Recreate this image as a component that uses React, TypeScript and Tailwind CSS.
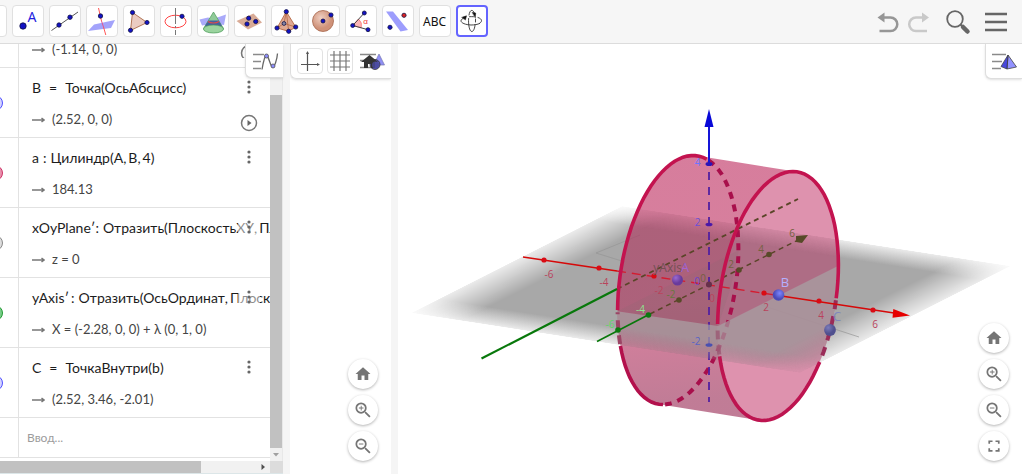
import type { ReactNode } from "react";

const BLUE = "#0b0bd0";

function Dot({ x, y, r = 3, fill = "#1212c4" }: { x: number; y: number; r?: number; fill?: string }) {
  return <circle cx={x} cy={y} r={r} fill={fill} stroke="#111144" strokeWidth="0.8" />;
}

const tools: { name: string; icon: ReactNode }[] = [
  { name: "Перемещать", icon: null },
  {
    name: "Точка",
    icon: (
      <>
        <Dot x={11} y={21} r={3.2} />
        <text x="20" y="16.5" fontSize="14" textAnchor="middle" fill="#1f1fe0" className="font-['Noto_Sans',sans-serif]">A</text>
      </>
    ),
  },
  {
    name: "Прямая",
    icon: (
      <>
        <path d="M2.5 25.5 29 7" stroke="#555" strokeWidth="1" />
        <Dot x={10} y={20} r={2.2} />
        <Dot x={21} y={12.2} r={2.2} />
      </>
    ),
  },
  {
    name: "Перпендикулярная прямая",
    icon: (
      <>
        <path d="M2 26 8 19.5 29 15 25 23Z" fill="#a3a3fb" />
        <path d="M12.5 3 15.5 16M17.5 22 19.8 30" stroke="#ff5555" strokeWidth="1" />
        <path d="M15.5 16 17.5 22" stroke="#e05590" strokeWidth="1" />
        <Dot x={14.5} y={11} r={2.2} />
      </>
    ),
  },
  {
    name: "Многоугольник",
    icon: (
      <>
        <path d="M9.5 7.5 24 17.5 7.5 25.5Z" fill="#ebccc2" stroke="#aa6a48" strokeWidth="0.9" />
        <Dot x={9.5} y={7.5} r={2.1} />
        <Dot x={24} y={17.5} r={2.1} />
        <Dot x={7.5} y={25.3} r={2.1} />
      </>
    ),
  },
  {
    name: "Окружность по оси и точке",
    icon: (
      <>
        <ellipse cx="15.5" cy="16.5" rx="10.5" ry="6.3" fill="none" stroke="#ff4444" strokeWidth="1" />
        <path d="M15.5 3v16M15.5 21v2M15.5 25v5" stroke="#777" strokeWidth="1" />
        <Dot x={22} y={11.3} r={2.1} />
      </>
    ),
  },
  {
    name: "Кривая пересечения",
    icon: (
      <>
        <path d="M2.500 14.500 11 12.500 16 14 29 9.500 27 20 18 18.500 5 20.500Z" fill="#aaaafa" />
        <path d="M16.5 7 6.5 23.5a10 3.8 0 0 0 20 0Z" fill="#8fca98" stroke="#4b9b58" strokeWidth="0.7" />
        <path d="M11.5 15.5 8 21c5 2.5 12 2.5 17 0l-3.5-5.5Z" fill="#44609f" />
        <ellipse cx="16.5" cy="24" rx="10" ry="4" fill="#9bd49f" stroke="#4b9b58" strokeWidth="0.7" />
        <path d="M11 16.5c3 2 8 2 11 0" fill="none" stroke="#e34b4b" strokeWidth="1.1" />
      </>
    ),
  },
  {
    name: "Плоскость через три точки",
    icon: (
      <>
        <path d="M2.5 16 19.5 8.5 28 17.5 14 24.5Z" fill="#d9ab96" />
        <Dot x={13} y={19} r={2.1} />
        <Dot x={14.7} y={13.2} r={2.1} />
        <Dot x={21.7} y={16.5} r={2.1} />
      </>
    ),
  },
  {
    name: "Пирамида",
    icon: (
      <>
        <path d="M15.3 6.7 6 23 17.7 26.3 24.7 22Z" fill="#dfa993" stroke="#b66742" strokeWidth="0.9" />
        <path d="M15.3 6.7 17.7 26.3M15.3 6.7 13 18.5 6 23M13 18.5 24.7 22" stroke="#b66742" strokeWidth="0.8" fill="none" />
        <Dot x={13} y={18.5} r={1.9} fill="#8585a4" />
        <Dot x={15.3} y={6.7} r={2.1} />
        <Dot x={6} y={23} r={2.1} />
        <Dot x={17.7} y={26.3} r={2.1} />
        <Dot x={24.7} y={22} r={2.1} />
      </>
    ),
  },
  {
    name: "Сфера",
    icon: (
      <>
        <circle cx="15" cy="16" r="10.5" fill="url(#ball)" stroke="#a7674d" strokeWidth="0.8" />
        <Dot x={15} y={16} r={2} />
        <Dot x={23} y={10} r={2.1} />
      </>
    ),
  },
  {
    name: "Угол",
    icon: (
      <>
        <path d="M7.7 20.5 13.5 14a8.5 8.5 0 0 1 2.7 8.8Z" fill="#fbb5b5" stroke="#ff6666" strokeWidth="0.7" />
        <path d="M19.3 8 7.7 20.5 23 24.7" fill="none" stroke="#444" strokeWidth="1" />
        <Dot x={7.7} y={20.5} r={2} />
        <Dot x={19.3} y={8} r={2} />
        <Dot x={23} y={24.7} r={2} />
        <text x="20.5" y="18.5" fontSize="8" textAnchor="middle" fill="#e33" className="font-['Liberation_Sans',sans-serif]">α</text>
      </>
    ),
  },
  {
    name: "Отражение относительно плоскости",
    icon: (
      <>
        <path d="M4 6.5h7L26 25l-7.500 1.500Z" fill="#9d9dfd" />
        <Dot x={22} y={10.3} r={2.1} fill="#d22" />
        <Dot x={8} y={22.3} r={2.1} />
      </>
    ),
  },
  {
    name: "Текст",
    icon: (
      <text x="15.500" y="21" fontSize="12" textAnchor="middle" fill="#111" className="font-['Noto_Sans',sans-serif]">ABC</text>
    ),
  },
  {
    name: "Вращать чертёж",
    icon: (
      <g fill="none" stroke="#333" strokeWidth="0.900" strokeLinecap="round">
        <path d="M13 10c.4-2.500 1.300-4.600 2.800-4.600 1 0 1.900 1 2.500 2.600M12.600 13.500c-.4 6 .8 13 3.200 13 1.900 0 3-3.500 3.300-7M19.500 14v3" />
        <path d="M9 12.800c-2.500.7-4 1.700-4 3 0 2.200 4.600 4 10 4.200 3.500 0 6.500-.5 8.600-1.500M22 12.500c2.200.7 3.500 1.800 3.500 3.200 0 .9-.6 1.800-1.800 2.500M13.500 11.700c1.300-.1 2.600-.1 4 0" />
        <path d="m6 12.300 4.500-1.500-1 3.900ZM16.500 7.500l3.200.6-.4 4.400Z" fill="#111" stroke="#111" strokeWidth="0.500" />
      </g>
    ),
  },
];

function Header() {
  return (
    <header className="flex h-11 shrink-0 items-start justify-between overflow-hidden border-b border-[#dcdcdc] bg-[#f6f6f6] pt-[5px]">
      <nav aria-label="Инструменты" className="-ml-[25px] flex gap-[5px]">
        {tools.map((t) => (
          <button
            key={t.name}
            aria-label={t.name}
            className={
              t.name === "Вращать чертёж"
                ? "h-8 w-8 shrink-0 rounded border-2 border-[#6464ff] bg-white"
                : "h-8 w-8 shrink-0 rounded border border-[#e0e0e0] bg-white"
            }
          >
            <svg viewBox="0 0 32 32" className={t.name === "Вращать чертёж" ? "-m-0.5 h-8 w-8" : "-m-px h-8 w-8"}>
              <defs>
                <radialGradient id="ball" cx="0.4" cy="0.35">
                  <stop offset="0" stopColor="#efcfc2" />
                  <stop offset="1" stopColor="#cf9279" />
                </radialGradient>
              </defs>
              {t.icon}
            </svg>
          </button>
        ))}
      </nav>
      <div className="flex items-center pr-3.5">
        <button aria-label="Отменить" className="h-8 w-[30px]">
          <svg viewBox="0 0 30 32" className="h-8 w-[30px]" fill="none">
            <path d="M7 12.500h9.500a6.800 6.800 0 0 1 0 13.600H5.500" stroke="#969696" strokeWidth="2.500" />
            <path d="M3.500 12.500l7-5v10Z" fill="#969696" />
          </svg>
        </button>
        <button aria-label="Повторить" className="h-8 w-[30px]">
          <svg viewBox="0 0 30 32" className="h-8 w-[30px]" fill="none">
            <path d="M20 12.500h-8a6.800 6.800 0 0 0 0 13.600h11" stroke="#c9c9c9" strokeWidth="2.500" />
            <path d="M25 12.500l-7-5v10Z" fill="#c9c9c9" />
          </svg>
        </button>
        <button aria-label="Поиск" className="ml-2 h-8 w-8">
          <svg viewBox="0 0 32 32" className="h-8 w-8" fill="none" stroke="#666">
            <circle cx="13" cy="14" r="7.800" strokeWidth="1.800" />
            <path d="m18.500 19.500 2.500 2.500" strokeWidth="2" />
            <path d="m21 22 4.500 4.500" strokeWidth="4.500" strokeLinecap="round" />
          </svg>
        </button>
        <button aria-label="Меню" className="ml-[10px] h-8 w-[24px]">
          <svg viewBox="0 0 24 32" className="h-8 w-[24px]" stroke="#666" strokeWidth="2.400">
            <path d="M1 9h22M1 17h22M1 25h22" />
          </svg>
        </button>
      </div>
    </header>
  );
}

type Item = { title: ReactNode; value: string; ring: string; play?: boolean };

function Comma() {
  return <span className="mr-0.5">,</span>;
}

const items: Item[] = [
  {
    title: (
      <>
        <span>B</span>
        <span className="mx-2">=</span>
        <span>Точка(ОсьАбсцисс)</span>
      </>
    ),
    value: "(2.52, 0, 0)",
    ring: "h-4 w-4 rounded-full border border-[#4d4dff] bg-[#d4d4ff]",
    play: true,
  },
  {
    title: (
      <>
        <span>a</span>
        <span className="mx-1">:</span>
        <span>Цилиндр(A</span>
        <Comma />
        <span>B</span>
        <Comma />
        <span>4)</span>
      </>
    ),
    value: "184.13",
    ring: "h-4 w-4 rounded-full border border-[#cc3366] bg-[#e890ac]",
  },
  {
    title: (
      <>
        <span>xOyPlane′</span>
        <span className="mr-1">:</span>
        <span>Отразить(ПлоскостьXY</span>
        <Comma />
        <span>Пл</span>
      </>
    ),
    value: "z = 0",
    ring: "h-4 w-4 rounded-full border border-[#888888] bg-[#dddddd]",
  },
  {
    title: (
      <>
        <span>yAxis′</span>
        <span className="mr-1 ml-0.5">:</span>
        <span>Отразить(ОсьОрдинат</span>
        <Comma />
        <span>Плоскос</span>
      </>
    ),
    value: "X = (-2.28, 0, 0) + λ (0, 1, 0)",
    ring: "h-4 w-4 rounded-full border border-[#229933] bg-[#77cc88]",
  },
  {
    title: (
      <>
        <span>C</span>
        <span className="mx-2">=</span>
        <span>ТочкаВнутри(b)</span>
      </>
    ),
    value: "(2.52, 3.46, -2.01)",
    ring: "h-4 w-4 rounded-full border border-[#4d4dff] bg-[#d4d4ff]",
  },
];

function Value({ children }: { children: ReactNode }) {
  return (
    <div className="flex h-5 items-center gap-[7px] whitespace-nowrap text-[13px] text-[#444]">
      <svg viewBox="0 0 13 8" className="h-2 w-[13px]" fill="none" stroke="#777" strokeWidth="1.500">
        <path d="M0 4h12M9.500 2 12 4 9.500 6" />
      </svg>
      <span>{children}</span>
    </div>
  );
}

function AlgebraIcon() {
  return (
    <svg viewBox="0 0 38 34" className="h-[34px] w-[38px]" fill="none">
      <path d="M7 10.500h11M7 17.500h8M7 24.500h8" stroke="#8a8a8a" strokeWidth="1.600" />
      <path d="M16 25.500c1.200-7 2.500-14 4.500-14.500 2 .5 4 12 6 12s4.500-7 5-13.500" stroke="#666" strokeWidth="1.300" />
      <circle cx="20.500" cy="12" r="2" fill="#8c8cff" stroke="#555" strokeWidth="0.800" />
      <circle cx="27" cy="22" r="2" fill="#8c8cff" stroke="#555" strokeWidth="0.800" />
    </svg>
  );
}

function AlgebraPanel() {
  return (
    <section aria-label="Алгебра" className="relative flex w-[283px] shrink-0 flex-col bg-white">
      <div className="flex min-h-0 flex-1">
        <div className="min-w-0 flex-1 overflow-hidden font-['Lato','Noto_Sans',sans-serif]">
          <div className="flex h-6 border-b border-[#e2e2e2]">
            <div className="w-[19px] shrink-0 border-r border-[#e2e2e2]" />
            <div className="relative -mt-1 flex-1 pl-[13px]">
              <Value>(-1.14, 0, 0)</Value>
              <svg viewBox="0 0 18 18" className="absolute top-0 right-3 h-[18px] w-[18px]" fill="none" stroke="#777" strokeWidth="1.500">
                <circle cx="9" cy="13" r="7.500" />
              </svg>
            </div>
          </div>
          <ul>
            {items.map((it, i) => (
              <li key={i} className="flex h-[70px] border-b border-[#e2e2e2]">
                <div className="flex w-[19px] shrink-0 items-center border-r border-[#e2e2e2]">
                  <span className="-ml-[13px] block">
                    <span className={"block " + it.ring} />
                  </span>
                </div>
                <div className="relative min-w-0 flex-1 overflow-hidden pt-[7px] pl-[13px]">
                  <div className="mb-[11px] flex h-6 items-center text-[14px] whitespace-pre text-[#1c1c1c]">{it.title}</div>
                  <Value>{it.value}</Value>
                  <div className="absolute top-2 right-[10px] flex w-[22px] flex-col items-center gap-3.5 bg-white/50">
                    <button aria-label="Дополнительно" className="flex h-6 w-5 items-center justify-center">
                      <svg viewBox="0 0 4 16" className="h-4 w-1" fill="#666">
                        <circle cx="2" cy="2" r="1.600" />
                        <circle cx="2" cy="7" r="1.600" />
                        <circle cx="2" cy="12" r="1.600" />
                      </svg>
                    </button>
                    {it.play && (
                      <button aria-label="Анимация" className="h-[18px] w-[18px]">
                        <svg viewBox="0 0 18 18" className="h-[18px] w-[18px]" fill="none" stroke="#777" strokeWidth="1.500">
                          <circle cx="9" cy="9" r="7.500" />
                          <path d="M7.500 6v6l4-3Z" fill="#666" stroke="none" />
                        </svg>
                      </button>
                    )}
                  </div>
                </div>
              </li>
            ))}
          </ul>
          <div className="flex h-10 border-b border-[#e2e2e2]">
            <div className="w-[19px] shrink-0 border-r border-[#e2e2e2]" />
            <input
              aria-label="Ввод"
              placeholder="Ввод..."
              className="min-w-0 flex-1 bg-transparent pl-2 text-[12px] outline-none placeholder:text-[#9c9c9c]"
            />
          </div>
        </div>
        <div className="flex w-[13px] shrink-0 flex-col border-r border-[#e8e8e8] bg-[#f1f1f1] pt-[51px]">
          <div className="flex-1 bg-[#c1c1c1]" />
          <svg viewBox="0 0 12 13" className="h-[13px] w-3">
            <path d="M3 5h6L6 8.500Z" fill="#a0a0a0" />
          </svg>
        </div>
      </div>
      <div className="flex h-[13px] shrink-0 items-stretch border-b border-[#dce6e8] bg-[#f1f1f1]">
        <div className="w-[201px] bg-[#c1c1c1]" />
        <svg viewBox="0 0 12 12" className="ml-auto h-3 w-3">
          <path d="M3.500 3v6L7 6Z" fill="#505050" />
        </svg>
        <div className="w-[13px] bg-[#dcdcdc]" />
      </div>
      <button aria-label="Стиль панели" className="absolute top-0 right-0 h-[34px] w-[38px] rounded-bl-md border-b border-l border-[#dedede] bg-white shadow-sm">
        <AlgebraIcon />
      </button>
    </section>
  );
}

function RoundButton({ name, children }: { name: string; children: ReactNode }) {
  return (
    <button aria-label={name} className="flex h-[30px] w-[30px] items-center justify-center rounded-full bg-white shadow-[0_1px_3px_rgba(0,0,0,0.3)]">
      <svg viewBox="0 0 24 24" className="h-[18px] w-[18px]" fill="#757575">
        {children}
      </svg>
    </button>
  );
}

const lens =
  "M15.500 14h-.79l-.28-.27A6.470 6.470 0 0 0 16 9.500 6.500 6.500 0 1 0 9.500 16c1.610 0 3.090-.59 4.230-1.570l.27.28v.79l5 4.990L20.490 19zm-6 0C7.010 14 5 11.990 5 9.500S7.010 5 9.500 5 14 7.010 14 9.500 11.990 14 9.500 14";

function ViewButtons({ full }: { full?: boolean }) {
  return (
    <div className="absolute right-[13px] bottom-[13px] flex flex-col gap-1.5">
      <RoundButton name="Исходный вид">
        <path d="M10 20v-6h4v6h5v-8h3L12 3 2 12h3v8z" />
      </RoundButton>
      <RoundButton name="Увеличить">
        <path d={lens} transform="matrix(1.150 0 0 1.150 -1.500 -1.500)" />
        <path d="M9 6.200v2.500H6.500v1.300H9v2.500h1.200V10h2.500V8.700h-2.500V6.200Z" />
      </RoundButton>
      <RoundButton name="Уменьшить">
        <path d={lens} transform="matrix(1.150 0 0 1.150 -1.500 -1.500)" />
        <path d="M6.500 8.700h6V10h-6Z" />
      </RoundButton>
      {full && (
        <RoundButton name="Во весь экран">
          <path d="M4.500 9V4.500H10v2.300H6.800V9ZM14 4.500h5.500V9h-2.300V6.800H14ZM4.500 15h2.300v2.200H10v2.300H4.500ZM17.200 15h2.300v4.500H14v-2.300h3.200Z" />
        </RoundButton>
      )}
    </div>
  );
}

function PlanePanel() {
  return (
    <section aria-label="Полотно" className="relative mx-[7px] w-[101px] shrink-0 overflow-hidden bg-white">
      <div className="flex h-[35px] items-center gap-1 rounded-bl-md border-b border-l border-[#dedede] pl-1.5 shadow-sm">
        <button aria-label="Оси" className="h-[26px] w-[26px] shrink-0 rounded border border-[#e2e2e2]">
          <svg viewBox="0 0 24 24" className="h-6 w-6" stroke="#555" strokeWidth="1.200">
            <path d="M9.500 3v19M3 15.500h18" />
            <path d="M9.500 2 8 5h3ZM22 15.500 19 14v3Z" fill="#555" stroke="none" />
          </svg>
        </button>
        <button aria-label="Сетка" className="h-[26px] w-[26px] shrink-0 rounded border border-[#e2e2e2]">
          <svg viewBox="0 0 24 24" className="h-6 w-6" stroke="#777" strokeWidth="1.200">
            <path d="M6 2v20M12 2v20M18 2v20M2 6h20M2 12h20M2 18h20" />
          </svg>
        </button>
        <button aria-label="Стиль полотна" className="ml-0.5 h-[26px] w-[26px] shrink-0">
          <svg viewBox="0 0 26 26" className="h-[26px] w-[26px]">
            <path d="M1 6.500h16M1 12.500h9M1 19.500h13" stroke="#888" strokeWidth="1.700" />
            <path d="m20 6 5.500 11h-11Z" fill="#8f8ff5" stroke="#7777b0" strokeWidth="0.700" />
            <circle cx="16" cy="16.500" r="5" fill="#5656b8" stroke="#333" strokeWidth="0.800" />
            <path d="M10.500 7 2 14h3v6h4v-4h3v4h4v-6h3Z" fill="#333" />
            <circle cx="16.500" cy="17" r="3.500" fill="#4a4a9c" fillOpacity="0.800" />
          </svg>
        </button>
      </div>
      <ViewButtons />
    </section>
  );
}

type Pt = [number, number];
const A: Pt = [678, 280];
const B: Pt = [778, 296];

/* Points of a base circle in projection: 0° is its top, 90° its right side. */
function arc([cx, cy]: Pt, from: number, to: number, move = true) {
  const n = Math.max(8, Math.ceil(Math.abs(to - from) / 4));
  let d = "";
  for (let i = 0; i <= n; i++) {
    const t = ((from + ((to - from) * i) / n) * Math.PI) / 180;
    const x = cx + Math.cos(t) * 15 + Math.sin(t) * 58.5;
    const y = cy - Math.cos(t) * 124.5;
    d += (i === 0 && move ? "M" : "L") + x.toFixed(1) + " " + y.toFixed(1);
  }
  return d;
}

const hull = arc(A, 184, 364) + arc(B, 4, 184, false) + "Z";
const rightDisc = arc(B, 0, 360) + "Z";

function PlaneSurface() {
  return (
    <g transform="matrix(211 -107 389 60 411 313)">
      <rect width="1" height="1" fill="url(#fadeU)" mask="url(#fadeV)" />
    </g>
  );
}

const xTicks: [number, number, string][] = [
  [544, 260, "-6"], [599, 268, "-4"], [654, 276, "-2"], [764, 293, "2"], [819, 301, "4"], [873, 310, "6"],
];
const yTicks: [number, number, string, string][] = [
  [618, 330, "-6", "#5fd66a"], [648.5, 315, "-4", "#8ce890"], [679, 300, "-2", "#66793c"],
  [739, 270, "2", "#75603e"], [769, 254.5, "4", "#75603e"], [800, 239, "6", "#75603e"],
];

function Scene() {
  return (
    <svg viewBox="398 44 624 430" className="h-full w-full font-['Open_Sans',sans-serif]" fill="none">
      <defs>
        <linearGradient id="fadeU" x1="0" x2="1" y1="0" y2="0">
          <stop offset="0" stopColor="#a8a8a8" stopOpacity="0.22" />
          <stop offset="0.13" stopColor="#a8a8a8" />
          <stop offset="0.87" stopColor="#a8a8a8" />
          <stop offset="1" stopColor="#a8a8a8" stopOpacity="0.22" />
        </linearGradient>
        <linearGradient id="fadeVg" x1="0" x2="0" y1="0" y2="1">
          <stop offset="0" stopColor="#fff" stopOpacity="0.22" />
          <stop offset="0.13" stopColor="#fff" />
          <stop offset="0.87" stopColor="#fff" />
          <stop offset="1" stopColor="#fff" stopOpacity="0.22" />
        </linearGradient>
        <mask id="fadeV" maskUnits="userSpaceOnUse" x="0" y="0" width="1" height="1">
          <rect width="1" height="1" fill="url(#fadeVg)" />
        </mask>
        <linearGradient id="side" gradientUnits="userSpaceOnUse" x1="670" y1="160" x2="690" y2="400">
          <stop offset="0" stopColor="#b10642" />
          <stop offset="0.6" stopColor="#b30c44" />
          <stop offset="1" stopColor="#870436" />
        </linearGradient>
        <clipPath id="front">
          <path d="M616 311 718 326 840 265V380H616Z" />
        </clipPath>
        <clipPath id="frontHull">
          <path d={hull} />
        </clipPath>
        <radialGradient id="pa" cx="0.35" cy="0.3"><stop offset="0" stopColor="#9a6ad0" /><stop offset="1" stopColor="#693a9c" /></radialGradient>
        <radialGradient id="pb" cx="0.6" cy="0.35"><stop offset="0" stopColor="#7d86ff" /><stop offset="1" stopColor="#4a4ab8" /></radialGradient>
        <radialGradient id="pc" cx="0.35" cy="0.3"><stop offset="0" stopColor="#7c7cba" /><stop offset="1" stopColor="#50508f" /></radialGradient>
      </defs>

      <PlaneSurface />
      <path d="M640 235 596 253 625 262M761 305 859 337" stroke="#959595" strokeWidth="0.7" />

      <path d={hull + rightDisc} fillRule="evenodd" fill="url(#side)" fillOpacity="0.52" />
      <path d={rightDisc} fill="#b8124e" fillOpacity="0.46" />
      <g clipPath="url(#frontHull)" opacity="0.14">
        <PlaneSurface />
      </g>
      <path d="M618 311 739 250 730 290 718 326Z" fill="#8a6a74" fillOpacity="0.2" />

      <path d={arc(A, 16, 178)} stroke="#a80f4b" strokeWidth="4" strokeDasharray="7 6" />

      <g stroke="#5a4528" strokeWidth="1.800">
        <path d="M617 289 798 199" strokeDasharray="5 4" />
        <path d="M650 314 800 239" strokeWidth="1.500" strokeDasharray="5 4" />
      </g>
      <path d="m808 235-12 1v6l6 1Z" fill="#574a28" />
      <path d="M709 172V402" stroke="#5221a0" strokeWidth="1.800" strokeDasharray="8 7" />
      <path d="M617 271 778 295.500" stroke="#d41c30" strokeWidth="1.400" strokeDasharray="9 6" />

      <g clipPath="url(#frontHull)">
        <g clipPath="url(#front)" opacity="0.66">
          <PlaneSurface />
        </g>
      </g>

      <path d={arc(A, 256, 374)} stroke="#c3134f" strokeWidth="3.600" />
      <path d={arc(A, 180, 238)} stroke="#b3104c" strokeWidth="3.600" />
      <path d={arc(A, 239, 255)} stroke="#9b4565" strokeWidth="4" strokeDasharray="9 6" />
      <path d={arc(B, 257, 451)} stroke="#c3134f" strokeWidth="3.600" />
      <path d={arc(B, 122, 241)} stroke="#bd1450" strokeWidth="3.600" />
      <path d={arc(B, 92, 120)} stroke="#9a2c58" strokeWidth="4" strokeDasharray="9 7" />
      <path d={arc(B, 242, 256)} stroke="#9b5873" strokeWidth="4" strokeDasharray="9 6" strokeOpacity="0.800" />

      <path d="M709 164V125" stroke="#1515d8" strokeWidth="2" />
      <path d="m709 109 4.500 18h-9Z" fill="#0808d8" />
      <path d="M523 257 617 271M778 295.500 894 313" stroke="#d60909" strokeWidth="1.500" />
      <path d="m910 315.500-17.500 2.200.8-8.800Z" fill="#e60000" />
      <path d="M481.500 358.500 617 289" stroke="#08780b" strokeWidth="2.200" />
      <path d="M597 341.500 648 315" stroke="#08780b" strokeWidth="1.600" />

      <g fontSize="10" textAnchor="middle">
        {xTicks.map(([x, y, s]) => (
          <g key={s}>
            <circle cx={x} cy={y} r="2.600" fill="#d90b14" />
            <text x={s.startsWith("-") ? x + 5 : x + 2} y={y + 18} fill="#b9435c">{s}</text>
          </g>
        ))}
        <text x="712" y="302" fill="#b9435c">0</text>
        {yTicks.map(([x, y, s, c], i) => (
          <g key={s}>
            <circle cx={x} cy={y} r="2.800" fill={i < 2 ? "#0b7a10" : "#574a28"} />
            <text x={x - 8} y={y - 2} fill={c}>{s}</text>
          </g>
        ))}
        <text x="703" y="282" fill="#75603e">0</text>
        <text x="697" y="285" fill="#6b45c8">0</text>
        <text x="697.500" y="166" fill="#6a75ff">4</text>
        <text x="697.500" y="226" fill="#6b50d8">2</text>
        <text x="696" y="345" fill="#5964c4">-2</text>
        <text x="669" y="272" fontSize="12" fill="#735054">yAxis′</text>
        <text x="685" y="272" fontSize="13" fill="#a363d0">A</text>
        <text x="785" y="287" fontSize="13" fill="#b4b0ff">B</text>
        <text x="837" y="321" fontSize="13" fill="#8187bc">C</text>
      </g>
      <ellipse cx="709" cy="164" rx="3.500" ry="2" fill="#2a15b8" />
      <ellipse cx="709" cy="224.500" rx="3.500" ry="1.800" fill="#4a18a8" />
      <ellipse cx="709" cy="345" rx="3.500" ry="1.800" fill="#4a50b0" />
      <circle cx="709" cy="284.500" r="3" fill="#66304a" />
      <circle cx="677.500" cy="280" r="5.500" fill="url(#pa)" />
      <circle cx="778.500" cy="295" r="5.800" fill="url(#pb)" />
      <circle cx="830" cy="330" r="5.900" fill="url(#pc)" />
    </svg>
  );
}

export default function App() {
  return (
    <div className="flex h-screen flex-col bg-[#f5f5f5]">
      <Header />
      <main className="flex min-h-0 flex-1">
        <AlgebraPanel />
        <PlanePanel />
        <section aria-label="3D Полотно" className="relative min-w-0 flex-1 overflow-hidden bg-white">
          <Scene />
          <button aria-label="Стиль 3D полотна" className="absolute top-0 right-0 h-[35px] w-[37px] rounded-bl-md border-b border-l border-[#dedede] bg-white shadow-sm">
            <svg viewBox="0 0 36 34" className="h-[34px] w-9">
              <path d="M6 10.500h14M6 17.500h10M6 24.500h9" stroke="#8a8a8a" strokeWidth="1.600" />
              <path d="M22 11 30.500 23 21 25Z" fill="#9292ff" stroke="#444" strokeWidth="0.800" />
              <path d="M22 11 15 22.500 21 25Z" fill={BLUE} fillOpacity="0.750" stroke="#444" strokeWidth="0.800" />
            </svg>
          </button>
          <ViewButtons full />
        </section>
      </main>
    </div>
  );
}
